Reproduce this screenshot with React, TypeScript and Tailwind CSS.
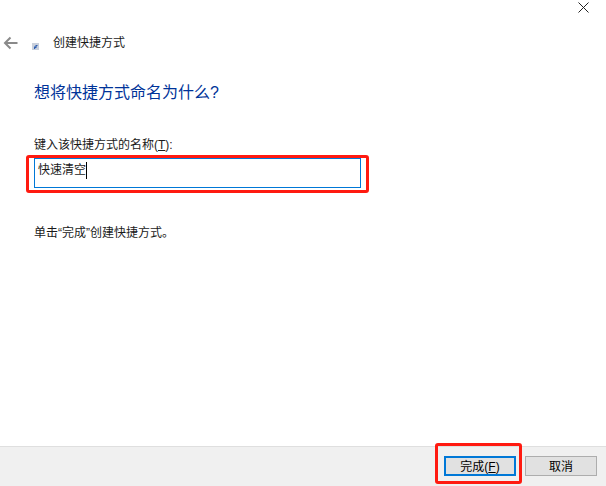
import React from 'react';

const font = 'font-["Liberation_Sans","Noto_Sans_CJK_SC",sans-serif]';

const App: React.FC = () => {
  return (
    <div className={`relative flex flex-col w-[606px] h-[486px] bg-white overflow-hidden ${font}`}>
      <div className="flex justify-end h-[14px] pr-[17px] pt-[2px]">
        <svg width="11" height="11" viewBox="0 0 11 11" className="shrink-0">
          <path d="M0.5 0.5L10.5 10.5M10.5 0.5L0.5 10.5" stroke="#222" strokeWidth="1" fill="none" />
        </svg>
      </div>

      <div className="flex items-center h-[32px] mt-[13px]">
        <svg width="16" height="14" viewBox="0 0 16 14" className="ml-[3px] shrink-0">
          <path d="M14.5 7H2.5M7.5 1.5L2 7l5.5 5.5" stroke="#8a8a8a" strokeWidth="2" fill="none" />
        </svg>
        <svg width="7" height="7" viewBox="0 0 7 7" className="ml-[13px] mt-[6px] shrink-0">
          <rect x="0" y="0" width="7" height="7" fill="#c9d0dc" />
          <path d="M2 6V3.5h1.5V2H6L4.5 3.5V5H3.2V6z" fill="#2f5fb0" />
        </svg>
        <span className="ml-[14px] text-[12px] leading-[16px] text-[#1a1a1a]">创建快捷方式</span>
      </div>

      <div className="pl-[34px] mt-[22px]">
        <h1 className="text-[16px] leading-[24px] font-normal text-[#003399]">想将快捷方式命名为什么?</h1>
        <label className="block mt-[32px] text-[12px] leading-[16px] text-[#1a1a1a]">
          键入该快捷方式的名称(<span className="underline">T</span>):
        </label>
        <div className="flex items-start w-[327px] h-[30px] mt-[5px] pl-[3px] pt-[3px] border border-[#0078d7] text-[12px] leading-[17px] text-[#1a1a1a]">
          <span>快速清空</span>
          <span className="w-px h-[17px] bg-black" />
        </div>
        <p className="mt-[37px] text-[12px] leading-[16px] text-[#1a1a1a]">单击“完成”创建快捷方式。</p>
      </div>

      <div className="flex justify-end gap-[9px] mt-auto h-[40px] pt-[9px] pr-[9px] bg-[#f0f0f0] border-t border-[#dfdfdf]">
        <button className="w-[72px] h-[20px] pt-px bg-[#e1e1e1] border-2 border-[#0078d7] text-[12px] leading-[14px] text-black">
          完成(<span className="underline">F</span>)
        </button>
        <button className="w-[72px] h-[20px] pt-px bg-[#e1e1e1] border border-[#adadad] text-[12px] leading-[16px] text-black">
          取消
        </button>
      </div>

      {/* red annotations on top of the dialog */}
      <div className="absolute left-[26px] top-[155px] w-[343px] h-[38px] border-[3px] border-[#ff1a10] rounded-[3px]" />
      <div className="absolute left-[435px] top-[443px] w-[87px] h-[41px] border-[3px] border-[#ff1a10] rounded-[3px]" />
    </div>
  );
};

export default App;
